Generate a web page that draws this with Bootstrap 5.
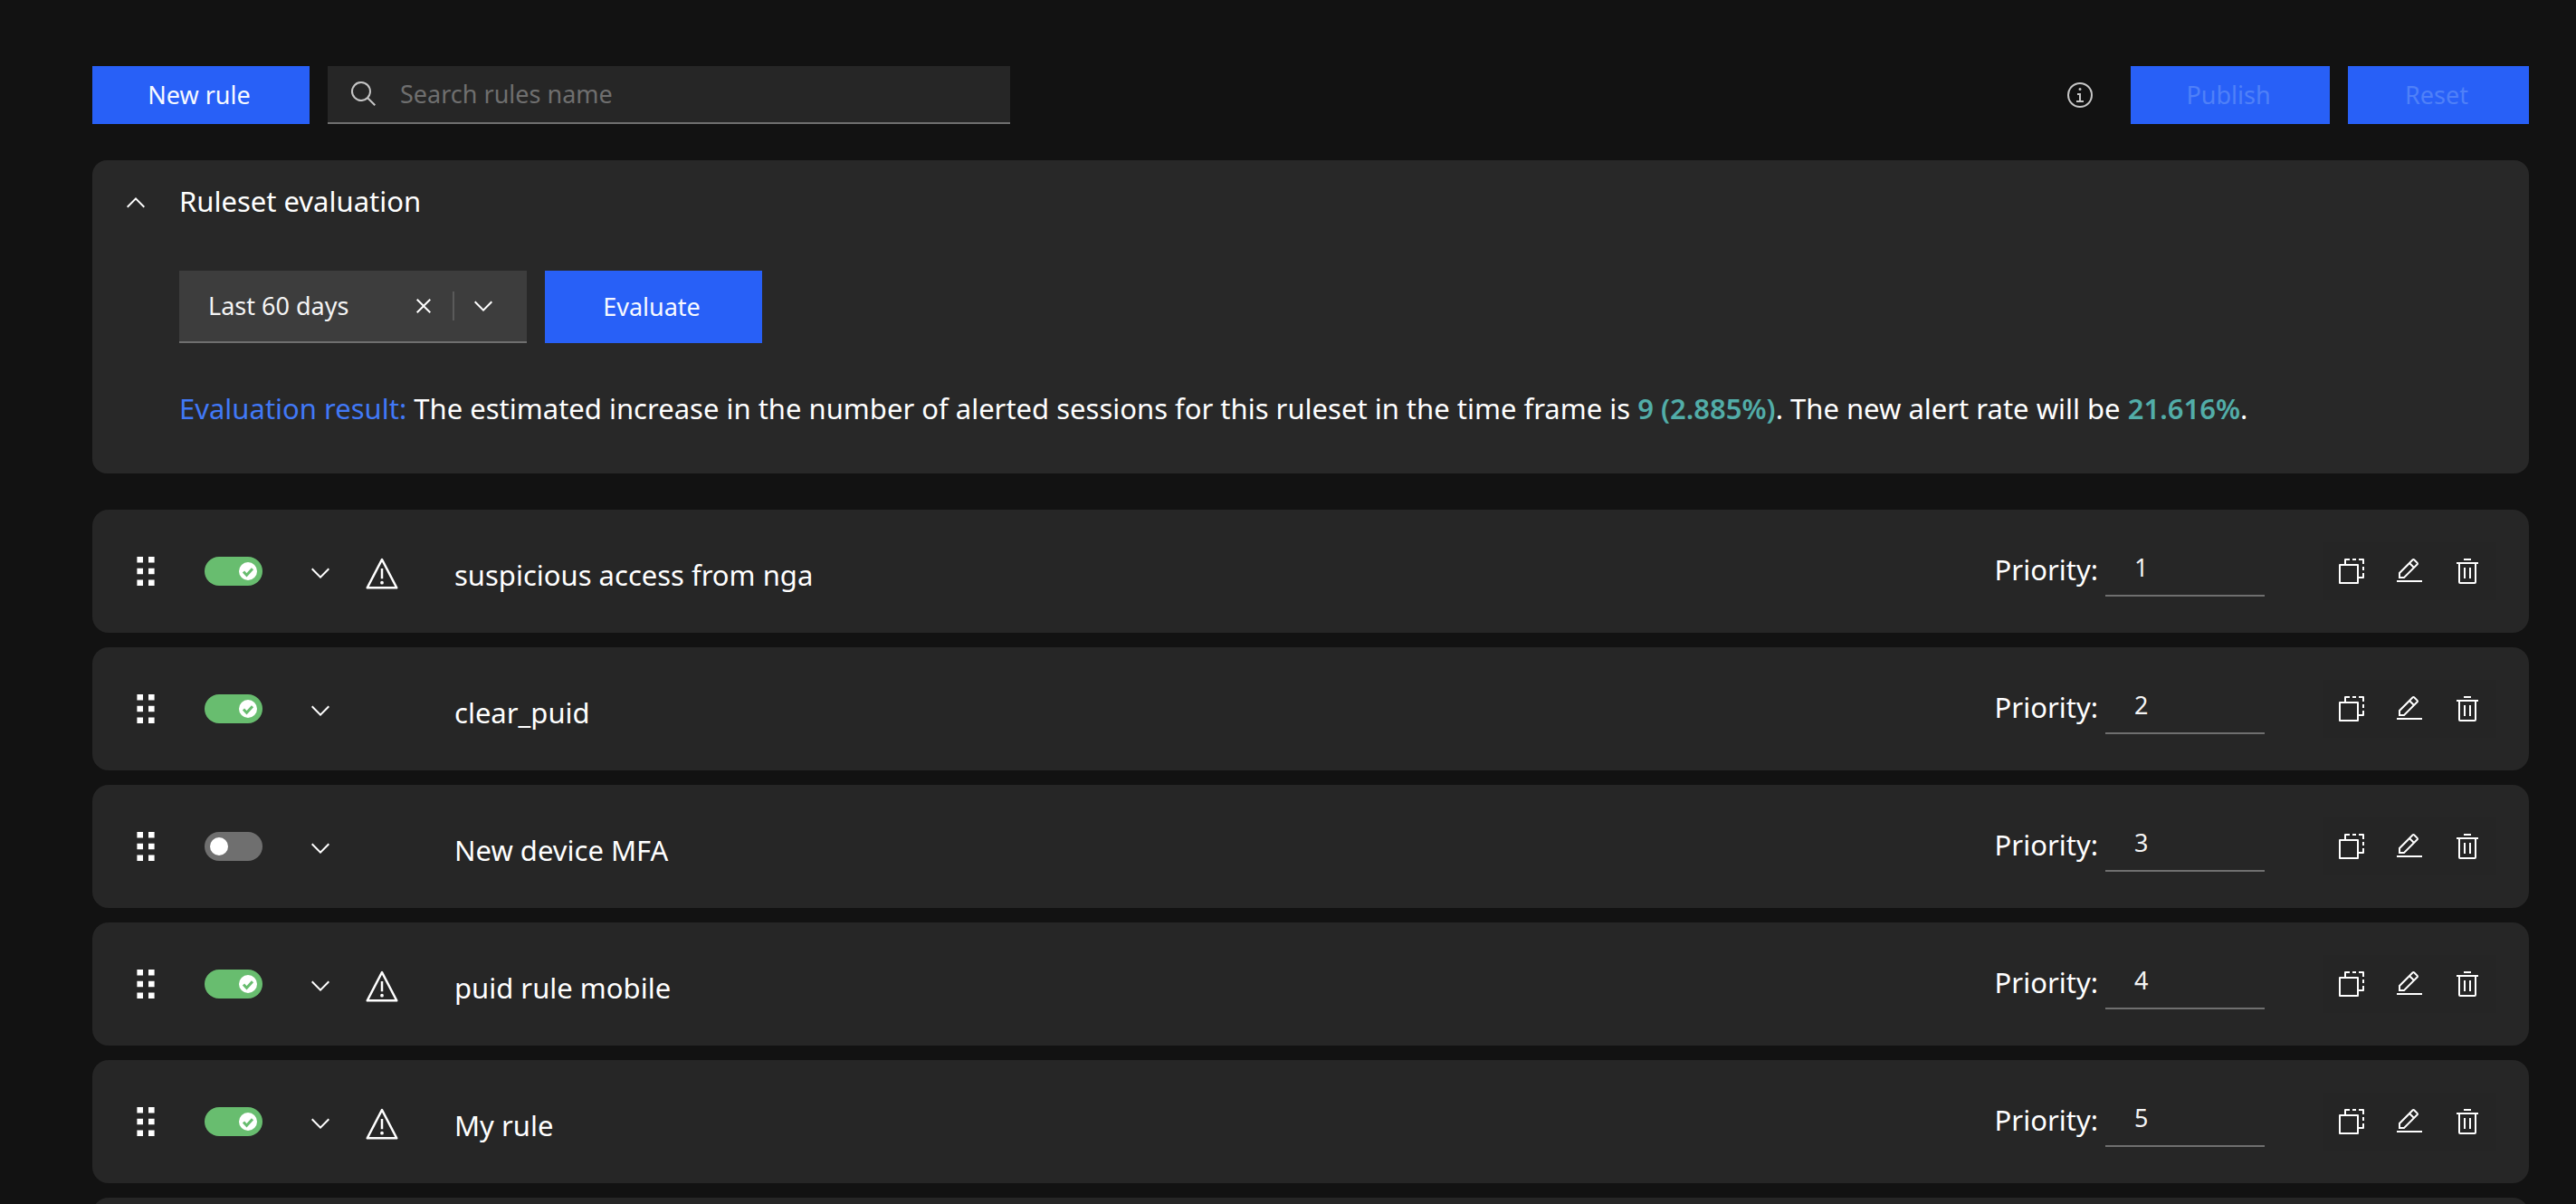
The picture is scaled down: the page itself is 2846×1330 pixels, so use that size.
<!DOCTYPE html>
<html lang="en" data-bs-theme="dark">
<head>
<meta charset="utf-8">
<meta name="viewport" content="width=device-width, initial-scale=1">
<title>Rules</title>
<link href="https://cdn.jsdelivr.net/npm/bootstrap@5.3.0/dist/css/bootstrap.min.css" rel="stylesheet">
<style>
  :root { --ui-blue: #2860f7; --ui-page: #121212; --ui-line: #6f6f6f; }
  body { background: var(--ui-page); color: #fff; font-family: "Noto Sans", sans-serif; font-size: 31px; line-height: 48px; }
  .page-shell { padding: 73px 52px 0 102px; height: 100vh; overflow: hidden; }
  .glyph { width: 32px; height: 32px; fill: currentColor; display: block; flex: none; }
  .glyph-lg { width: 40px; height: 40px; }

  .btn { --bs-btn-border-radius: 0; --bs-btn-font-size: 27px; --bs-btn-line-height: 40px; --bs-btn-border-width: 0; }
  .btn-primary { --bs-btn-bg: var(--ui-blue); --bs-btn-color: #f7f9ff; --bs-btn-hover-bg: #0353e9;
    --bs-btn-disabled-bg: var(--ui-blue); --bs-btn-disabled-color: #4f80f8; --bs-btn-disabled-opacity: 1; }
  .act { width: 240px; height: 64px; padding-right: 16px; }
  .act-tall { height: 80px; }
  .act-publish { width: 220px; }
  .act-reset { width: 200px; }
  .btn-plain { --bs-btn-color: #fff; --bs-btn-hover-color: #fff; --bs-btn-padding-x: 0; --bs-btn-padding-y: 0; }

  .toolbar-row { margin-bottom: 40px; gap: 20px; }
  .toolbar-end { gap: 20px; }
  .info-btn { margin-right: 20px; color: #c6c6c6; }
  .search-field { flex: 0 1 754px; height: 64px; padding: 0 24px; gap: 24px; background: #262626; border-bottom: 2px solid var(--ui-line); color: #c6c6c6; }
  .field-input { background: transparent; border: 0; border-radius: 0; padding: 0; color: #f4f4f4; font-size: 27px; line-height: 40px; }
  .field-input:focus { background: transparent; box-shadow: none; color: #fff; }
  .field-input::placeholder { color: #6f6f6f; }

  .eval-panel { background: #282828; border-radius: 16px; padding: 0 32px 48px; margin-bottom: 40px; }
  .eval-head { height: 90px; gap: 32px; }
  .eval-head .btn { padding-top: 4px; }
  .eval-body { padding: 32px 0 0 64px; }
  .period-box { width: 384px; height: 80px; padding: 0 32px; gap: 16px; background: #3d3d3d; border-bottom: 2px solid var(--ui-line); }
  .period-box .form-select { background-image: none; width: auto; min-width: 0; }
  .split { width: 2px; height: 32px; background: #5a5a5a; }
  .eval-text { margin: 48px 0 0; }
  .tint-blue { color: #4179f7; }
  .tint-teal { color: #52ada8; font-weight: 600; }

  .rule-list { gap: 16px; }
  .rule-item { height: 136px; flex: none; background: #262626; border-radius: 18px; padding: 0 36px 0 48px; }
  .drag { margin-right: 54px; cursor: grab; }
  .drag svg { width: 22px; height: 34px; display: block; fill: #fff; }
  .form-switch { padding: 0; min-height: 0; margin: 0 48px 0 0; }
  .form-switch .form-check-input { float: none; display: block; margin: 0; width: 64px; height: 32px; border: 0; border-radius: 16px; background-color: #6f6f6f; background-size: 64px 32px; background-position: center;
    background-image: url("data:image/svg+xml,%3Csvg xmlns='http://www.w3.org/2000/svg' viewBox='0 0 64 32'%3E%3Ccircle cx='16' cy='16' r='10' fill='%23fff'/%3E%3C/svg%3E"); }
  .form-switch .form-check-input:checked { background-color: #68bd6f; background-position: center;
    background-image: url("data:image/svg+xml,%3Csvg xmlns='http://www.w3.org/2000/svg' viewBox='0 0 64 32'%3E%3Ccircle cx='48' cy='16' r='10' fill='%23fff'/%3E%3Cpath d='M43 16.5l3.5 3.7 6.5-7' fill='none' stroke='%2368bd6f' stroke-width='3'/%3E%3C/svg%3E"); }
  .rule-name { gap: 32px; padding-top: 4px; }
  .warn-slot { width: 40px; height: 40px; margin-right: 28px; flex: none; }
  .rule-title { padding-top: 4px; }
  .prio { gap: 8px; margin: 0 64px 8px 0; }
  .prio label { padding-top: 4px; }
  .prio .field-input { width: 176px; height: 64px; padding: 0 32px; border-bottom: 2px solid var(--ui-line); }
  .tool-set { background: #252525; }
  .tool-set .btn { width: 64px; height: 64px; padding: 16px; }
</style>
<script src="https://cdn.jsdelivr.net/npm/bootstrap@5.3.0/dist/js/bootstrap.bundle.min.js"></script>
</head>
<body>
<svg class="d-none" aria-hidden="true">
  <symbol id="i-search" viewBox="0 0 32 32"><path d="M29 27.6l-7.6-7.6a11 11 0 1 0-1.4 1.4L27.6 29zM4 13a9 9 0 1 1 9 9 9 9 0 0 1-9-9z"/></symbol>
  <symbol id="i-info" viewBox="0 0 32 32"><path d="M17 22V14h-4v2h2v6h-3v2h8v-2zM16 8a1.5 1.5 0 1 0 1.5 1.5A1.5 1.5 0 0 0 16 8z"/><path d="M16 30a14 14 0 1 1 14-14 14 14 0 0 1-14 14zm0-26a12 12 0 1 0 12 12A12 12 0 0 0 16 4z"/></symbol>
  <symbol id="i-up" viewBox="0 0 32 32"><path d="M16 10l10 10-1.4 1.4L16 12.8l-8.6 8.6L6 20z"/></symbol>
  <symbol id="i-down" viewBox="0 0 32 32"><path d="M16 22L6 12l1.4-1.4 8.6 8.6 8.6-8.6L26 12z"/></symbol>
  <symbol id="i-close" viewBox="0 0 32 32"><path d="M24 9.4L22.6 8 16 14.6 9.4 8 8 9.4l6.6 6.6L8 22.6 9.4 24l6.6-6.6 6.6 6.6 1.4-1.4-6.6-6.6z"/></symbol>
  <symbol id="i-drag" viewBox="0 0 22 34"><path d="M1.4 1h6.6v6.6H1.4zM14 1h6.6v6.6H14zM1.4 13.8h6.6v6.4H1.4zM14 13.8h6.6v6.4H14zM1.4 26.4h6.6V33H1.4zM14 26.4h6.6V33H14z"/></symbol>
  <symbol id="i-warn" viewBox="0 0 32 32"><path d="M16 23a1.5 1.5 0 1 0 1.5 1.5A1.5 1.5 0 0 0 16 23zM15 12h2v9h-2z"/><path d="M29 30H3a1 1 0 0 1-.89-1.46l13-25a1 1 0 0 1 1.78 0l13 25A1 1 0 0 1 29 30zM4.65 28h22.7L16 6.17z"/></symbol>
  <symbol id="i-copy" viewBox="0 0 32 32"><path fill-rule="evenodd" d="M3 8h20a1 1 0 0 1 1 1v20a1 1 0 0 1-1 1H3a1 1 0 0 1-1-1V9a1 1 0 0 1 1-1zm1 2v18h18V10z"/><path d="M8 8V3a1 1 0 0 1 1-1h5v2h-4v4zM17 2h4v2h-4zM24 2h5a1 1 0 0 1 1 1v5h-2V4h-4zM28 11h2v4h-2zM28 18h2v5a1 1 0 0 1-1 1h-5v-2h4z"/></symbol>
  <symbol id="i-edit" viewBox="0 0 32 32"><path d="M2 26h28v2H2zM25.4 9c.8-.8.8-2 0-2.8l-3.6-3.6c-.8-.8-2-.8-2.8 0l-15 15V24h6.4zM20.4 4L24 7.6l-3 3L17.4 7zM6 22v-3.6l10-10 3.6 3.6-10 10z"/></symbol>
  <symbol id="i-trash" viewBox="0 0 32 32"><path d="M12 12h2v12h-2zM18 12h2v12h-2zM12 2h8v2h-8z"/><path d="M4 6v2h2v20a2 2 0 0 0 2 2h16a2 2 0 0 0 2-2V8h2V6zm4 22V8h16v20z"/></symbol>
</svg>

<main class="page-shell d-flex flex-column">
  <div class="toolbar-row d-flex align-items-center">
    <button type="button" class="btn btn-primary act">New rule</button>
    <label class="search-field d-flex align-items-center">
      <svg class="glyph"><use href="#i-search"/></svg>
      <input type="search" class="form-control field-input" placeholder="Search rules name" aria-label="Search rules name">
    </label>
    <div class="toolbar-end d-flex align-items-center ms-auto">
      <button type="button" class="btn btn-plain info-btn" aria-label="Information"><svg class="glyph"><use href="#i-info"/></svg></button>
      <button type="button" class="btn btn-primary act act-publish" disabled>Publish</button>
      <button type="button" class="btn btn-primary act act-reset" disabled>Reset</button>
    </div>
  </div>

  <section class="eval-panel">
    <div class="eval-head d-flex align-items-center">
      <button type="button" class="btn btn-plain" aria-label="Collapse" aria-expanded="true"><svg class="glyph"><use href="#i-up"/></svg></button>
      <span>Ruleset evaluation</span>
    </div>
    <div class="eval-body">
      <div class="toolbar-end d-flex">
        <div class="period-box d-flex align-items-center">
          <select class="form-select field-input flex-fill" aria-label="Time frame">
            <option>Last 60 days</option>
          </select>
          <button type="button" class="btn btn-plain" aria-label="Clear"><svg class="glyph"><use href="#i-close"/></svg></button>
          <span class="split"></span>
          <svg class="glyph" aria-hidden="true"><use href="#i-down"/></svg>
        </div>
        <button type="button" class="btn btn-primary act act-tall">Evaluate</button>
      </div>
      <p class="eval-text"><span class="tint-blue">Evaluation result:</span> The estimated increase in the number of alerted sessions for this ruleset in the time frame is <span class="tint-teal">9 (2.885%)</span>. The new alert rate will be <span class="tint-teal">21.616%</span>.</p>
    </div>
  </section>

  <div class="rule-list d-flex flex-column" id="ruleList"></div>
</main>

<script>
  const rules = [
    { name: 'suspicious access from nga', on: true, warn: true },
    { name: 'clear_puid', on: true, warn: false },
    { name: 'New device MFA', on: false, warn: false },
    { name: 'puid rule mobile', on: true, warn: true },
    { name: 'My rule', on: true, warn: true }
  ];
  const icon = (id, extra = '') => `<svg class="glyph ${extra}"><use href="#i-${id}"/></svg>`;
  const tool = (id, label) => `<button type="button" class="btn btn-plain" aria-label="${label}">${icon(id)}</button>`;
  document.getElementById('ruleList').innerHTML = rules.map((r, i) => `
    <div class="rule-item d-flex align-items-center">
      <button type="button" class="btn btn-plain drag" aria-label="Reorder"><svg><use href="#i-drag"/></svg></button>
      <div class="form-check form-switch">
        <input class="form-check-input" type="checkbox" role="switch" aria-label="Enable ${r.name}" ${r.on ? 'checked' : ''}>
      </div>
      <div class="rule-name d-flex align-items-center flex-fill">
        <button type="button" class="btn btn-plain" aria-label="Expand">${icon('down')}</button>
        <span class="warn-slot">${r.warn ? icon('warn', 'glyph-lg') : ''}</span>
        <span class="rule-title">${r.name}</span>
      </div>
      <div class="prio d-flex align-items-center">
        <label for="prio${i}">Priority:</label>
        <input id="prio${i}" type="text" inputmode="numeric" class="form-control field-input" value="${i + 1}">
      </div>
      <div class="tool-set d-flex">${tool('copy', 'Duplicate')}${tool('edit', 'Edit')}${tool('trash', 'Delete')}</div>
    </div>`).join('') + '<div class="rule-item"></div>';
</script>
</body>
</html>
